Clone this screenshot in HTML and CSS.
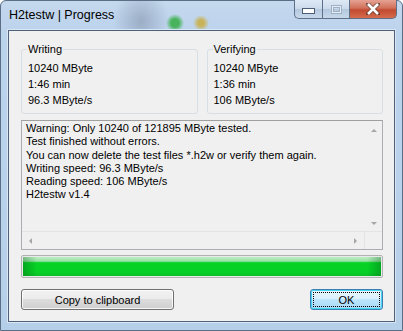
FILE: index.html
```html
<!doctype html>
<html lang="en">
  <head>
    <meta charset="UTF-8" />
    <meta name="viewport" content="width=device-width, initial-scale=1.0" />
    <title>H2testw | Progress</title>
    <link rel="stylesheet" href="styles.css">
  </head>
  <body>
    <div class="window">
      <div class="titlebar">
        <span class="title">H2testw | Progress</span>
        <div class="caption">
          <div class="cap-btn minimize"><span class="min-bar"></span></div>
          <div class="cap-btn maximize"><span class="max-box"></span></div>
          <div class="cap-btn close">
            <svg width="14" height="12" viewBox="0 0 14 12">
              <path d="M2 1 L12 11 M12 1 L2 11" stroke="#3a2a2a" stroke-width="4.2" stroke-linecap="square" opacity="0.6"/>
              <path d="M2 1 L12 11 M12 1 L2 11" stroke="#ffffff" stroke-width="2.6"/>
            </svg>
          </div>
        </div>
      </div>

      <div class="client">
        <div class="groups">
          <fieldset class="group">
            <legend>Writing</legend>
            <p>10240 MByte</p>
            <p>1:46 min</p>
            <p>96.3 MByte/s</p>
          </fieldset>
          <fieldset class="group">
            <legend>Verifying</legend>
            <p>10240 MByte</p>
            <p>1:36 min</p>
            <p>106 MByte/s</p>
          </fieldset>
        </div>

        <div class="log">
          <div class="log-body">
            <div class="log-text">
              <p>Warning: Only 10240 of 121895 MByte tested.</p>
              <p>Test finished without errors.</p>
              <p>You can now delete the test files *.h2w or verify them again.</p>
              <p>Writing speed: 96.3 MByte/s</p>
              <p>Reading speed: 106 MByte/s</p>
              <p>H2testw v1.4</p>
            </div>
            <div class="vscroll">
              <span class="arrow up"></span>
              <span class="arrow down"></span>
            </div>
          </div>
          <div class="hscroll">
            <span class="arrow left"></span>
            <span class="arrow right"></span>
            <span class="corner"></span>
          </div>
        </div>

        <div class="progress"><div class="progress-fill"></div></div>

        <div class="buttons">
          <button class="btn copy">Copy to clipboard</button>
          <button class="btn ok"><span class="focus">OK</span></button>
        </div>
      </div>
    </div>
  </body>
</html>
```

FILE: styles.css
```css
body {
  margin: 0;
  font-family: 'Liberation Sans', Arial, sans-serif;
  font-size: 11px;
  color: #000;
}
.window {
  width: 403px;
  height: 331px;
  box-sizing: border-box;
  padding: 0 7px 8px 7px;
  border: 1px solid #5a6f86;
  border-radius: 6px 6px 0 0;
  background:
    radial-gradient(circle at 174px 22px, #48b35c 0, #48b35c 4px, rgba(72, 179, 92, 0) 9px),
    radial-gradient(circle at 200px 22px, #c9b35a 0, #c9b35a 3px, rgba(201, 179, 90, 0) 8px),
    radial-gradient(ellipse at 140px 20px, rgba(120, 135, 160, 0.5) 0, rgba(120, 135, 160, 0) 28px),
    linear-gradient(180deg, #c4d8ee 0%, #bcd3ec 10%, #b6cfe9 100%);
  display: flex;
  flex-direction: column;
}
.titlebar {
  height: 29px;
  display: flex;
  justify-content: space-between;
  align-items: flex-start;
  flex-shrink: 0;
}
.title {
  font-size: 12.5px;
  margin-top: 7px;
  margin-left: 1px;
  color: #000;
}
.caption {
  display: flex;
  margin-top: -1px;
  margin-right: -2px;
}
.cap-btn {
  height: 19px;
  display: flex;
  align-items: center;
  justify-content: center;
  border: 1px solid #5c7089;
  border-top: none;
  box-sizing: border-box;
}
.minimize {
  width: 28px;
  border-radius: 0 0 0 5px;
  border-right: none;
  background: linear-gradient(180deg, #dfe9f5 0%, #cbdaeb 50%, #b4c8de 51%, #c7d8ea 100%);
}
.maximize {
  width: 27px;
  border-right: none;
  background: linear-gradient(180deg, #dfe9f5 0%, #cbdaeb 50%, #b4c8de 51%, #c7d8ea 100%);
}
.close {
  width: 48px;
  border-radius: 0 0 5px 0;
  background: linear-gradient(180deg, #e6a293 0%, #d0705a 45%, #c24a30 55%, #d66b4c 100%);
}
.min-bar {
  width: 11px;
  height: 4px;
  margin-top: 3px;
  background: #fff;
  border: 1px solid #4d5f75;
}
.max-box {
  width: 9px;
  height: 7px;
  border: 1px solid #9fb0c4;
  box-shadow: inset 0 0 0 1px #e4ecf5, inset 0 0 0 2px #9fb0c4;
}
.client {
  flex: 1;
  background: #f0f0f0;
  border: 1px solid #4e6178;
  box-shadow: 0 0 0 1px #d9e6f4;
  padding: 11px 11px 0 12px;
  display: flex;
  flex-direction: column;
}
.groups {
  display: flex;
  gap: 9px;
}
.group {
  flex: 1;
  margin: 0;
  height: 72px;
  box-sizing: border-box;
  border: 1px solid #d5dfe5;
  border-radius: 3px;
  padding: 4px 0 0 6px;
}
.group legend {
  padding: 0 1px;
  margin-left: -1px;
  line-height: 14px;
}
.group p {
  margin: 0;
  line-height: 16px;
}
.log {
  margin-top: 6px;
  height: 130px;
  box-sizing: border-box;
  border: 1px solid #abadb3;
  border-top-color: #a0a0a0;
  background: #f0f0f0;
  display: flex;
  flex-direction: column;
}
.log-body {
  flex: 1;
  display: flex;
}
.log-text {
  flex: 1;
  padding: 1px 0 0 4px;
}
.log-text p {
  margin: 0;
  line-height: 13.3px;
}
.vscroll {
  width: 17px;
  display: flex;
  flex-direction: column;
  justify-content: space-between;
  align-items: center;
  padding: 8px 0 6px;
}
.hscroll {
  height: 17px;
  display: flex;
  align-items: center;
  border-top: 1px solid #e3e3e3;
  padding-left: 7px;
}
.hscroll .corner {
  width: 17px;
  height: 17px;
  background: #f0f0f0;
  border-left: 1px solid #e3e3e3;
}
.arrow {
  width: 0;
  height: 0;
  border: 3px solid transparent;
}
.arrow.up {
  border-bottom: 3px solid #a6a6a6;
  border-top: none;
}
.arrow.down {
  border-top: 3px solid #a6a6a6;
  border-bottom: none;
}
.arrow.left {
  border-right: 3px solid #a6a6a6;
  border-left: none;
}
.arrow.right {
  border-left: 3px solid #a6a6a6;
  border-right: none;
  margin-left: auto;
  margin-right: 7px;
}
.progress {
  margin-top: 5px;
  height: 23px;
  box-sizing: border-box;
  border: 1px solid #b2b2b2;
  border-radius: 2px;
  padding: 1px;
  background: #eaeaea;
}
.progress-fill {
  height: 100%;
  background:
    linear-gradient(90deg, rgba(0, 90, 20, 0.35) 0, rgba(0, 90, 20, 0) 14px, rgba(0, 90, 20, 0) calc(100% - 14px), rgba(0, 90, 20, 0.35) 100%),
    linear-gradient(180deg, #bdeec4 0%, #9ae2a6 22%, #06d326 30%, #06d025 80%, #0bbf28 100%);
}
.buttons {
  display: flex;
  justify-content: space-between;
  margin-top: 11px;
}
.btn {
  height: 21px;
  box-sizing: border-box;
  font-family: 'Liberation Sans', Arial, sans-serif;
  font-size: 11px;
  color: #000;
  border: 1px solid #707070;
  border-radius: 3px;
  background: linear-gradient(180deg, #f2f2f2 0%, #ebebeb 48%, #dddddd 50%, #cfcfcf 100%);
  box-shadow: inset 0 0 0 1px rgba(255, 255, 255, 0.8);
  padding: 0;
}
.copy {
  width: 153px;
}
.ok {
  width: 73px;
  border-color: #3c7fb1;
  background: linear-gradient(180deg, #eaf6fd 0%, #d9f0fc 48%, #bee6fd 50%, #a7d9f5 100%);
  box-shadow: inset 0 0 0 1px #48d6f6;
  display: flex;
  padding: 2px;
}
.focus {
  flex: 1;
  border: 1px dotted #000;
  display: flex;
  align-items: center;
  justify-content: center;
}
```
